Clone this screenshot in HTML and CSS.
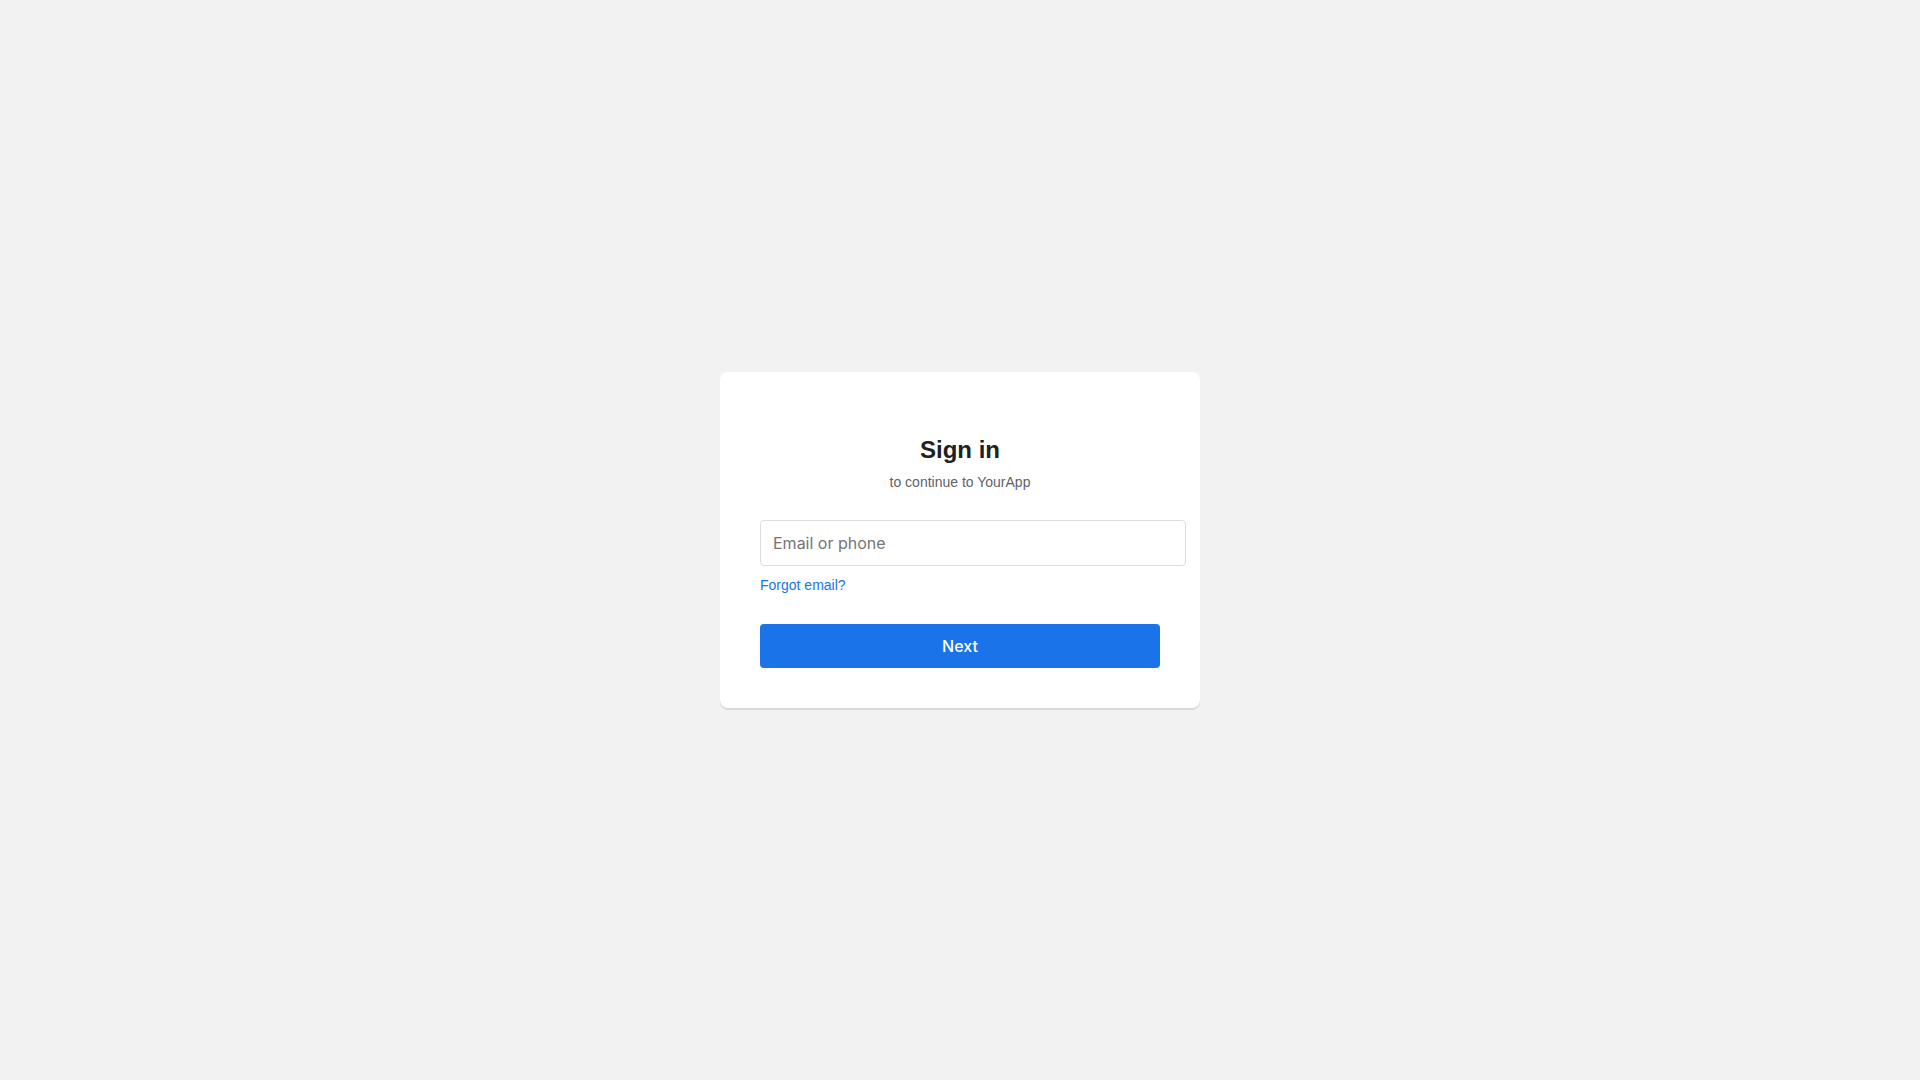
FILE: index.html
```html
<!DOCTYPE html>
<html lang="en">
<head>
  <meta charset="UTF-8">
  <meta name="viewport" content="width=device-width, initial-scale=1.0">
  <title>Sign in</title>
  <link rel="stylesheet" href="styles.css">
</head>
<body>
  <main class="card">
    <h1 class="title">Sign in</h1>
    <p class="subtitle">to continue to YourApp</p>

    <form>
      <input class="text-input" type="text" id="email" name="email" placeholder="Email or phone" aria-label="Email or phone">
      <a class="forgot" href="#">Forgot email?</a>
      <button class="next-button" type="submit">Next</button>
    </form>
  </main>
</body>
</html>
```

FILE: styles.css
```css
body {
  display: flex;
  justify-content: center;
  align-items: center;
  min-height: 100vh;
  margin: 0;
  background-color: #f2f2f2;
  font-family: "Liberation Sans", Arial, sans-serif;
}

.card {
  box-sizing: border-box;
  width: 100%;
  max-width: 480px;
  padding: 40px;
  background-color: #fff;
  border-radius: 8px;
  box-shadow: 0 2px 0 rgba(0, 0, 0, 0.1);
}

.title {
  margin: 24px 0 10px;
  font-size: 24px;
  line-height: 28px;
  color: #202124;
  text-align: center;
}

.subtitle {
  margin: 0 0 30px;
  font-size: 14px;
  line-height: 16px;
  color: #5f6368;
  text-align: center;
}

/* padding and border sit outside the 100% width */
.text-input {
  display: block;
  width: 100%;
  padding: 12px;
  border: 1px solid #dadce0;
  border-radius: 4px;
  font-family: Inter, sans-serif;
  font-size: 16px;
  line-height: 20px;
}

.forgot {
  display: block;
  width: fit-content;
  margin: 11px 0 31px;
  font-size: 14px;
  line-height: 16px;
  color: #1a73e8;
  text-decoration: none;
}

.forgot:hover {
  text-decoration: underline;
}

.next-button {
  width: 100%;
  padding: 12px;
  border: none;
  border-radius: 4px;
  background-color: #1a73e8;
  color: #fff;
  font-family: Inter, sans-serif;
  font-size: 16px;
  font-weight: 500;
  line-height: 20px;
  cursor: pointer;
}
```
